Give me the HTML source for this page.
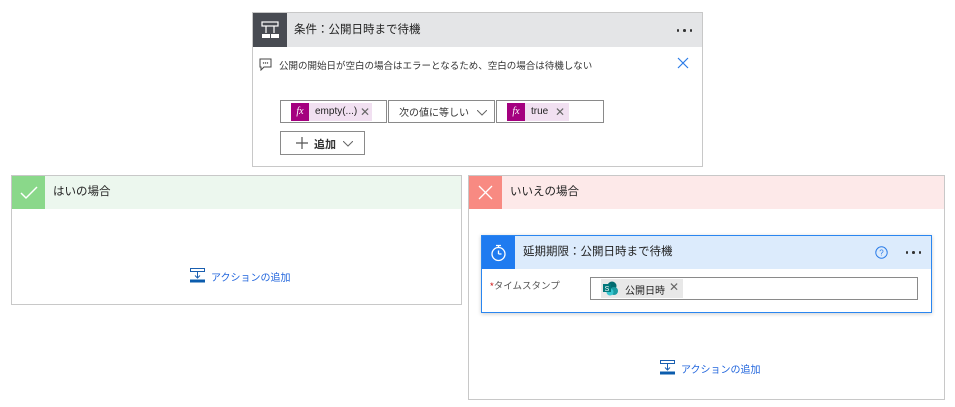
<!DOCTYPE html>
<html><head><meta charset="utf-8"><style>
*{box-sizing:border-box;margin:0;padding:0}
body{width:955px;height:407px;background:#fff;position:relative;font-family:"Liberation Sans","Noto Sans CJK JP",sans-serif;font-size:11px;color:#222;overflow:hidden}
.abs{position:absolute}
.card{position:absolute;border:1px solid #c8c8c8;background:#fff}
.hdr{position:absolute;left:0;top:0;right:0;height:33px}
.ico{position:absolute;left:0;top:0;width:33px;height:33px}
.ttl{position:absolute;left:41px;top:0;line-height:33px;font-size:11.5px;color:#222}
.box{position:absolute;border:1px solid #8a8a8a;height:23px;background:#fff}
.tok{position:absolute;top:2px;height:18px;background:#f1e0f1;line-height:18px;font-size:10px}
.tok span{top:0;line-height:18px}
.fx{position:absolute;left:0;top:0;width:18px;height:18px;background:#a4007f;color:#fff;font-family:"Liberation Serif",serif;font-style:italic;font-size:10px;text-align:center}
.link{color:#2266dd;font-size:10px}
.dots{position:absolute;display:flex;gap:4px}
.dots i{width:2.5px;height:2.5px;background:#333;border-radius:50%;display:block}
</style></head><body>
<div class="card" style="left:252px;top:12px;width:451px;height:155px">
 <div class="hdr" style="background:#e4e5e7;height:34px">
  <div class="ico" style="background:#484b52;width:34px;height:34px">
   <svg width="34" height="34"><g fill="none" stroke="#fff" stroke-width="1.2"><rect x="9" y="9" width="16" height="4"/><line x1="13" y1="13" x2="13" y2="20"/><line x1="21" y1="13" x2="21" y2="20"/></g><rect x="9" y="21" width="8" height="4" fill="#fff"/><rect x="18" y="21" width="8" height="4" fill="#fff"/></svg>
  </div>
  <div class="ttl" style="line-height:34px">条件：公開日時まで待機</div>
  <div class="dots" style="right:10px;top:16px"><i></i><i></i><i></i></div>
 </div>
 <svg class="abs" style="left:6px;top:45px" width="13" height="13"><path d="M1 1h11v8H5l-3 3V9H1z" fill="none" stroke="#444"/><circle cx="4.5" cy="5" r=".7" fill="#444"/><circle cx="6.5" cy="5" r=".7" fill="#444"/><circle cx="8.5" cy="5" r=".7" fill="#444"/></svg>
 <div class="abs" style="left:26px;top:45px;font-size:9.5px;color:#333">公開の開始日が空白の場合はエラーとなるため、空白の場合は待機しない</div>
 <svg class="abs" style="left:424px;top:44px" width="12" height="12"><path d="M1 1l10 10M11 1L1 11" stroke="#2b7ce8" stroke-width="1.2"/></svg>
 <div class="box" style="left:27px;top:87px;width:107px"><div class="tok" style="left:10px;width:81px"><div class="fx">fx</div><span class="abs" style="left:24px">empty(...)</span><span class="abs" style="left:69px;color:#666;font-size:12px">✕</span></div></div>
 <div class="box" style="left:135px;top:87px;width:107px"><span class="abs" style="left:10px;top:3px;font-size:10px;color:#333">次の値に等しい</span><svg class="abs" style="left:88px;top:9px" width="10" height="6"><path d="M0 0l5 5 5-5" fill="none" stroke="#666"/></svg></div>
 <div class="box" style="left:243px;top:87px;width:108px"><div class="tok" style="left:10px;width:62px"><div class="fx">fx</div><span class="abs" style="left:24px">true</span><span class="abs" style="left:48px;color:#666;font-size:12px">✕</span></div></div>
 <div class="box" style="left:27px;top:118px;width:85px;height:24px"><svg class="abs" style="left:15px;top:5px" width="12" height="12"><path d="M6 0v12M0 6h12" stroke="#555" stroke-width="1.2"/></svg><span class="abs" style="left:33px;top:4px;font-size:11px;font-weight:bold;color:#333">追加</span><svg class="abs" style="left:62px;top:9px" width="10" height="6"><path d="M0 0l5 5 5-5" fill="none" stroke="#666"/></svg></div>
</div>
<div class="card" style="left:11px;top:175px;width:451px;height:130px">
 <div class="hdr" style="background:#ecf7ee"><div class="ico" style="background:#8ad88a"><svg width="33" height="33"><path d="M9 17l5 5 11-11" fill="none" stroke="#fff" stroke-width="1.5"/></svg></div><div class="ttl">はいの場合</div></div>
 <svg class="abs" style="left:178px;top:92px" width="15" height="15"><rect x=".5" y=".5" width="14" height="3" fill="none" stroke="#1a5fb0"/><path d="M7.5 3.5v6M5 7.5l2.5 2.5 2.5-2.5" fill="none" stroke="#1a5fb0"/><rect x="0" y="11.5" width="15" height="3" fill="#0b5cad"/></svg>
 <div class="abs link" style="left:199px;top:93px">アクションの追加</div>
</div>
<div class="card" style="left:468px;top:175px;width:477px;height:225px">
 <div class="hdr" style="background:#fde9e9"><div class="ico" style="background:#f88a82"><svg width="33" height="33"><path d="M10 10l13 13M23 10L10 23" stroke="#fff" stroke-width="1.3"/></svg></div><div class="ttl">いいえの場合</div></div>
 <div class="abs" style="left:12px;top:59px;width:451px;height:78px;border:1px solid #2a86f0;box-shadow:0 1px 4px rgba(0,0,0,.2)">
  <div class="hdr" style="background:#dcebfc"><div class="ico" style="background:#1f7bf0"><svg width="33" height="33"><g fill="none" stroke="#fff" stroke-width="1.3"><circle cx="16.5" cy="18" r="6.5"/><path d="M16.5 18v-3.5M16.5 18h3M14 9.5h5M16.5 9.5v2"/></g></svg></div><div class="ttl" style="font-size:11.5px">延期期限：公開日時まで待機</div>
   <svg class="abs" style="left:393px;top:10px" width="13" height="13"><circle cx="6.5" cy="6.5" r="5.7" fill="none" stroke="#2b7ce8"/><text x="6.5" y="9.5" font-size="8" text-anchor="middle" fill="#2b7ce8" font-family="Liberation Sans">?</text></svg>
   <div class="dots" style="right:10px;top:15px"><i></i><i></i><i></i></div></div>
  <div class="abs" style="left:8px;top:42px;font-size:9.5px;color:#555"><span style="color:#c00">*</span>タイムスタンプ</div>
  <div class="box" style="left:108px;top:41px;width:328px;height:23px"><div class="abs" style="left:10px;top:1px;width:82px;height:19px;background:#e8e8e8"><svg class="abs" style="left:2px;top:2px" width="16" height="15"><circle cx="9" cy="5" r="4.5" fill="#036c70"/><circle cx="11" cy="10" r="4" fill="#1a9ba1"/><circle cx="7" cy="11" r="3.5" fill="#37c6d0"/><rect x="0" y="3" width="8" height="8" fill="#03787c"/><text x="4" y="10" font-size="7" fill="#fff" text-anchor="middle" font-family="Liberation Sans">S</text></svg><span class="abs" style="left:24px;top:3px;font-size:10px">公開日時</span><span class="abs" style="left:68px;top:1px;color:#666;font-size:12px">✕</span></div></div>
 </div>
 <svg class="abs" style="left:191px;top:184px" width="15" height="15"><rect x=".5" y=".5" width="14" height="3" fill="none" stroke="#1a5fb0"/><path d="M7.5 3.5v6M5 7.5l2.5 2.5 2.5-2.5" fill="none" stroke="#1a5fb0"/><rect x="0" y="11.5" width="15" height="3" fill="#0b5cad"/></svg>
 <div class="abs link" style="left:212px;top:185px">アクションの追加</div>
</div>
</body></html>
